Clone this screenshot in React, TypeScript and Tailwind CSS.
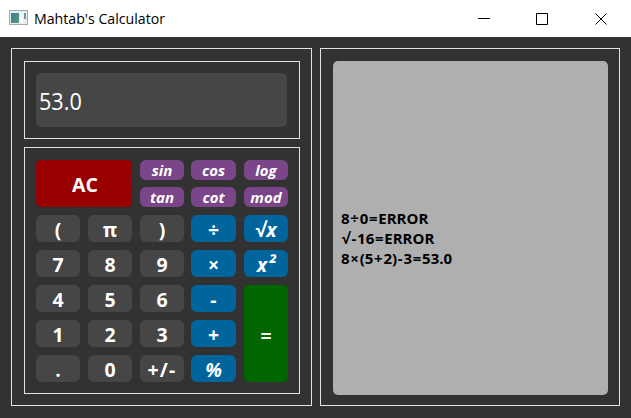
import React from "react";

type Tone = "number" | "operator" | "func" | "clear" | "equals";

interface KeyDef {
  label: React.ReactNode;
  tone: Tone;
  box?: string;
  text?: string;
}

const tones: Record<Tone, string> = {
  number: "bg-[#464646] rounded-[6px] text-[19.5px] leading-[27px]",
  operator: "bg-[#00659d] rounded-[6px] text-[19.5px] leading-[27px]",
  func: "bg-[#7a4589] rounded-[6px] text-[15px] leading-5 italic",
  clear: "bg-[#990000] rounded-[5px] text-[19.5px] leading-[27px]",
  equals: "bg-[#006600] rounded-[5px] text-[19.5px] leading-[27px]",
};

function Key({ label, tone, box = "", text = "top-px" }: KeyDef) {
  return (
    <button
      className={`flex items-center justify-center font-bold text-white ${tones[tone]} ${box}`}
    >
      <span className={`relative whitespace-nowrap ${text}`}>{label}</span>
    </button>
  );
}

const wide = "-ml-px";

const functionKeys: KeyDef[] = [
  { label: "sin", tone: "func", text: "top-0" },
  { label: "cos", tone: "func", box: wide, text: "top-0" },
  { label: "log", tone: "func", text: "top-0" },
  { label: "tan", tone: "func", text: "top-0" },
  { label: "cot", tone: "func", box: wide, text: "top-0" },
  { label: "mod", tone: "func", text: "top-0" },
];

const keys: KeyDef[] = [
  { label: "(", tone: "number" },
  { label: "π", tone: "number" },
  { label: ")", tone: "number" },
  { label: "÷", tone: "operator", box: wide },
  { label: <>√<i>x</i></>, tone: "operator" },
  { label: "7", tone: "number" },
  { label: "8", tone: "number" },
  { label: "9", tone: "number" },
  { label: "×", tone: "operator", box: wide },
  { label: <i>x<span className="relative -top-px ml-px">²</span></i>, tone: "operator" },
  { label: "4", tone: "number" },
  { label: "5", tone: "number" },
  { label: "6", tone: "number" },
  { label: "-", tone: "operator", box: wide },
  { label: "=", tone: "equals", box: "row-span-3", text: "top-[2px]" },
  { label: "1", tone: "number" },
  { label: "2", tone: "number" },
  { label: "3", tone: "number" },
  { label: "+", tone: "operator", box: wide },
  { label: ".", tone: "number" },
  { label: "0", tone: "number" },
  { label: "+/-", tone: "number", text: "top-px tracking-[1.1px]" },
  { label: <i>%</i>, tone: "operator", box: wide },
];

const history = ["8÷0=ERROR", "√-16=ERROR", "8×(5+2)-3=53.0"];

function HistoryLine({ entry }: { entry: string }) {
  return (
    <p className="relative top-[10px] whitespace-nowrap">
      {entry.split(/([÷×+=√-])/).map((part, i) =>
        i % 2 ? (
          <span key={i} className="px-[0.75px]">{part}</span>
        ) : (
          part
        ),
      )}
    </p>
  );
}

function TitleBar() {
  return (
    <header className="flex h-[37px] items-center bg-white pl-[9px] text-black">
      <svg className="relative -top-px" width="19" height="15" viewBox="0 0 19 15" shapeRendering="crispEdges">
        <defs>
          <linearGradient id="pane" x1="0" y1="0" x2="1" y2="1">
            <stop offset="0" stopColor="#3e7598" />
            <stop offset="1" stopColor="#55a276" />
          </linearGradient>
        </defs>
        <rect x="0.5" y="0.5" width="18" height="14" fill="#e9eef0" stroke="#a3abae" />
        <rect x="2" y="3" width="8" height="10" fill="url(#pane)" />
        <rect x="11" y="3" width="3" height="10" fill="#f7f9fa" />
        <rect x="15" y="3" width="2" height="6" fill="#6c9aa8" />
      </svg>
      <h1 className="relative -top-px ml-[6px] origin-left scale-x-[0.97] whitespace-nowrap text-[14.6px] leading-5">
        Mahtab's Calculator
      </h1>
      <svg className="ml-auto mr-[23px]" width="130" height="14" viewBox="0 0 130 14" fill="none" stroke="#000">
        <path d="M0 6.5H12" />
        <path d="M58.5 1.5h11v11h-11z" />
        <path d="M117.5 1.5l11 11M128.5 1.5l-11 11" />
      </svg>
    </header>
  );
}

export default function App() {
  return (
    <div className="flex h-[418px] w-[631px] flex-col overflow-hidden bg-[#323232] font-['Open_Sans','Noto_Sans',sans-serif]">
      <TitleBar />
      <main className="flex gap-2 pl-[11px] pt-[11px]">
        <section className="flex h-[358px] w-[301px] flex-col gap-2 border border-[#e2e2e2] p-3">
          <div className="h-[78px] w-[276px] shrink-0 border border-[#e2e2e2] p-[11px]">
            <div className="flex h-[54px] w-[251px] items-center rounded-[5px] bg-[#464646] pl-[3px] text-[23px] text-white">
              <span className="relative top-px origin-left scale-x-[0.94]">53.0</span>
            </div>
          </div>
          <div className="h-[247px] w-[276px] shrink-0 border border-[#e2e2e2] pl-[11px] pt-3">
            <div className="grid grid-cols-[44px_44px_44px_44px_44px] grid-rows-[47px_27px_27px_27px_27px_27px] gap-2">
              <Key label="AC" tone="clear" box="col-span-2" text="top-px left-px" />
              <div className="col-span-3 grid grid-cols-[44px_44px_44px] grid-rows-[20px_20px] gap-x-2 gap-y-[7px]">
                {functionKeys.map((k, i) => (
                  <Key key={i} {...k} />
                ))}
              </div>
              {keys.map((k, i) => (
                <Key key={i} {...k} />
              ))}
            </div>
          </div>
        </section>
        <section className="h-[358px] w-[300px] border border-[#e2e2e2] p-3">
          <div className="flex h-[334px] w-[275px] flex-col justify-center rounded-[5px] bg-[#afafaf] pl-2 text-[15px] font-bold leading-5 text-black">
            {history.map((entry) => (
              <HistoryLine key={entry} entry={entry} />
            ))}
          </div>
        </section>
      </main>
    </div>
  );
}
